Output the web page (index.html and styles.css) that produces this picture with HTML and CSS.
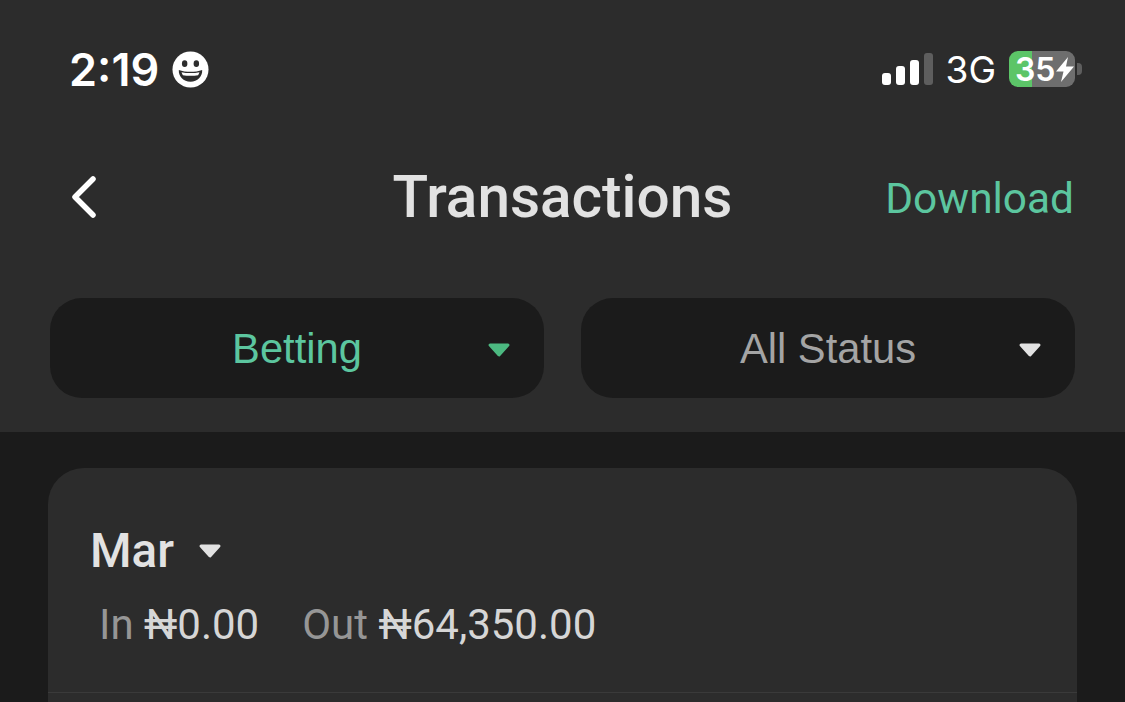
FILE: index.html
```html
<!DOCTYPE html>
<html lang="en">
<head>
  <meta charset="UTF-8">
  <meta name="viewport" content="width=device-width, initial-scale=1.0">
  <title>Transactions</title>
  <link rel="stylesheet" href="styles.css">
</head>
<body>
  <header class="top">
    <div class="status-bar">
      <div class="clock">
        <span class="time">2:19</span>
        <svg class="smiley" width="37" height="37" viewBox="0 0 38 38">
          <circle cx="19" cy="19" r="18.500" fill="#fff"/>
          <ellipse cx="13" cy="13" rx="2.800" ry="3.400" fill="#2c2c2c"/>
          <ellipse cx="25" cy="13" rx="2.800" ry="3.400" fill="#2c2c2c"/>
          <path d="M7 19.500c3.600 1.300 7.600 1.900 12 1.900s8.400-.6 12-1.900c.4 6.800-4.800 12-12 12S6.600 26.300 7 19.500z" fill="#2c2c2c"/>
          <path d="M9.800 21.800c2.900.6 5.900.9 9.200.9s6.300-.3 9.200-.9c-.3 1.200-.8 2.200-1.400 3-2.400.4-5 .6-7.800.6s-5.400-.2-7.800-.6c-.6-.8-1.100-1.800-1.400-3z" fill="#fff"/>
        </svg>
      </div>
      <div class="indicators">
        <div class="signal">
          <span class="bar bar-1"></span>
          <span class="bar bar-2"></span>
          <span class="bar bar-3"></span>
          <span class="bar bar-4"></span>
        </div>
        <span class="network">3G</span>
        <div class="battery">
          <div class="battery-body">
            <span>35</span>
            <svg width="18" height="25" viewBox="0 0 18 25"><path d="M12 0L0 14.500h7.500L5 25 18 9.500h-8z" fill="#fff"/></svg>
          </div>
          <span class="battery-cap"></span>
        </div>
      </div>
    </div>

    <nav class="nav">
      <svg class="back" width="30" height="46" viewBox="0 0 30 46"><path d="M24 5L6 23l18 18" fill="none" stroke="#fff" stroke-width="5.500" stroke-linecap="round" stroke-linejoin="round"/></svg>
      <h1>Transactions</h1>
      <a class="download">Download</a>
    </nav>

    <div class="filters">
      <div class="filter filter-active">
        <span>Betting</span>
        <svg class="caret" width="24" height="16" viewBox="0 0 24 16"><path d="M3 3h18l-9 10z" fill="currentColor" stroke="currentColor" stroke-width="3" stroke-linejoin="round"/></svg>
      </div>
      <div class="filter">
        <span>All Status</span>
        <svg class="caret" width="24" height="16" viewBox="0 0 24 16"><path d="M3 3h18l-9 10z" fill="currentColor" stroke="currentColor" stroke-width="3" stroke-linejoin="round"/></svg>
      </div>
    </div>
  </header>

  <main class="content">
    <section class="card">
      <div class="month">
        <span>Mar</span>
        <svg class="caret" width="24" height="16" viewBox="0 0 24 16"><path d="M3 3h18l-9 10z" fill="currentColor" stroke="currentColor" stroke-width="3" stroke-linejoin="round"/></svg>
      </div>
      <div class="totals">
        <span><em>In</em> ₦0.00</span>
        <span><em>Out</em> ₦64,350.00</span>
      </div>
      <div class="divider"></div>
    </section>
  </main>
</body>
</html>
```

FILE: styles.css
```css
body {
  margin: 0;
  height: 702px;
  overflow: hidden;
  background: #1b1b1b;
  color: #e2e2e2;
  font-family: Roboto, 'Liberation Sans', sans-serif;
}
.top {
  height: 432px;
  box-sizing: border-box;
  background: #2c2c2c;
  padding: 0 50px;
}
.status-bar {
  height: 138px;
  display: flex;
  justify-content: space-between;
  align-items: center;
  margin-right: -7px;
  padding-left: 19px;
}
.clock {
  display: flex;
  align-items: center;
  gap: 13px;
}
.time {
  font-family: Inter, sans-serif;
  font-size: 45px;
  font-weight: 600;
  color: #fff;
}
.indicators {
  display: flex;
  align-items: center;
}
.signal {
  display: flex;
  align-items: flex-end;
  gap: 5px;
  height: 32px;
}
.bar {
  width: 9px;
  border-radius: 3px;
  background: #fff;
}
.bar-1 { height: 12px; }
.bar-2 { height: 19px; }
.bar-3 { height: 25px; }
.bar-4 { height: 32px; background: #5e5e5e; }
.network {
  margin-left: 13px;
  font-family: Inter, sans-serif;
  font-size: 37px;
  color: #fff;
}
.battery {
  margin-left: 13px;
  display: flex;
  align-items: center;
  gap: 2px;
}
.battery-body {
  width: 66px;
  height: 36px;
  box-sizing: border-box;
  padding-left: 6px;
  display: flex;
  align-items: center;
  gap: 1px;
  border-radius: 9px;
  background: linear-gradient(90deg, #5cc568 0, #5cc568 23px, #6e6e6e 23px);
  font-family: Inter, sans-serif;
  font-size: 32px;
  font-weight: 600;
  color: #fff;
}
.battery-cap {
  width: 5px;
  height: 12px;
  border-radius: 0 4px 4px 0;
  background: #5e5e5e;
}
.nav {
  display: grid;
  grid-template-columns: 1fr auto 1fr;
  align-items: center;
  height: 118px;
  padding: 0 2px;
}
.back {
  margin-left: 17px;
}
.nav h1 {
  margin: 0;
  font-size: 58.500px;
  font-weight: 500;
  color: #e2e2e2;
}
.download {
  justify-self: end;
  margin-right: -1px;
  padding-top: 2px;
  font-size: 42.400px;
  color: #5cc69f;
}
.filters {
  margin-top: 42px;
  display: flex;
  gap: 37px;
}
.filter {
  flex: 1;
  height: 100px;
  box-sizing: border-box;
  padding-top: 2px;
  display: flex;
  align-items: center;
  justify-content: center;
  position: relative;
  border-radius: 32px;
  background: #1b1b1b;
  font-family: 'Liberation Sans', sans-serif;
  font-size: 41.700px;
  color: #a4a4a4;
}
.caret {
  display: block;
  color: #e2e2e2;
}
.filter .caret {
  position: absolute;
  right: 33px;
  top: 44px;
}
.filter-active {
  color: #5cc69f;
}
.filter-active .caret {
  color: #4cb981;
}
.content {
  height: 270px;
  box-sizing: border-box;
  padding: 36px 48px 0;
  overflow: hidden;
}
.card {
  height: 300px;
  box-sizing: border-box;
  padding-top: 55px;
  border-radius: 36px;
  background: #2c2c2c;
}
.month {
  display: flex;
  align-items: center;
  gap: 24px;
  padding-left: 42px;
  font-size: 47.500px;
  font-weight: 500;
  line-height: 56px;
}
.totals {
  margin-top: 22px;
  display: flex;
  gap: 43px;
  padding-left: 51px;
  font-size: 42px;
  line-height: 48px;
  color: #d6d6d6;
}
.totals em {
  font-style: normal;
  color: #969696;
}
.divider {
  margin-top: 43px;
  height: 1px;
  background: #3a3a3a;
}
```
